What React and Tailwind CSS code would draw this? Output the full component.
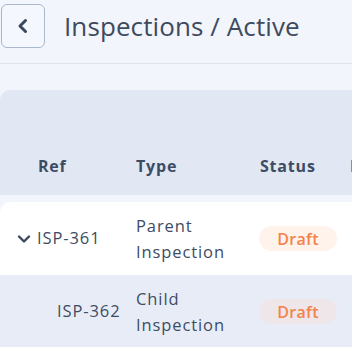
export default function App() {
  const font = { fontFamily: '"Open Sans", "Liberation Sans", sans-serif' };
  return (
    <div className="w-[352px] h-[347px] overflow-hidden bg-[#f2f5fc]" style={font}>
      <div className="flex items-center h-[64px] border-b border-[#dfe3ea] pl-[1px] pb-[14px] pt-[2px]">
        <button className="w-[44px] h-[44px] rounded-[6px] border border-[#a9b8cc] bg-[#f4f7fd] flex items-center justify-center">
          <svg width="16" height="16" viewBox="0 0 16 16">
            <path d="M10.5 2.5 L5 8 L10.5 13.5" fill="none" stroke="#3a475c" strokeWidth="3" strokeLinecap="round" strokeLinejoin="round" />
          </svg>
        </button>
        <div className="ml-[19px] text-[26px] leading-none text-[#3e4a5e] tracking-[0.1px]">Inspections / Active</div>
      </div>
      <div className="pt-[26px] w-[600px]">
        <div className="h-[105px] bg-[#e1e7f3] rounded-tl-[10px] flex items-end pb-[17px] text-[16px] font-bold text-[#3d4c64] tracking-[0.8px]">
          <div className="w-[136px] pl-[38px]">Ref</div>
          <div className="w-[124px]">Type</div>
          <div className="w-[90px]">Status</div>
          <div>Priority</div>
        </div>
        <div className="h-[7px]"></div>
        <div className="h-[73px] bg-white rounded-tl-[10px] flex items-center text-[16.5px] text-[#3d4c64] tracking-[0.9px]">
          <div className="w-[136px] flex items-center">
            <svg className="ml-[17px] mr-[6px]" width="14" height="10" viewBox="0 0 14 10">
              <path d="M2 2.5 L7 7.5 L12 2.5" fill="none" stroke="#3a475c" strokeWidth="2.4" strokeLinecap="round" strokeLinejoin="round" />
            </svg>
            <span>ISP-361</span>
          </div>
          <div className="w-[123px] leading-[26px]">Parent<br />Inspection</div>
          <div className="w-[78px] h-[25px] rounded-full bg-[#fff3ec] text-[#f4824a] font-semibold flex items-center justify-center text-[16px] tracking-[0.3px]">Draft</div>
        </div>
        <div className="h-[73px] bg-[#e8ecf6] flex items-center text-[16.5px] text-[#3d4c64] tracking-[0.9px]">
          <div className="w-[136px] pl-[57px]">ISP-362</div>
          <div className="w-[123px] leading-[26px]">Child<br />Inspection</div>
          <div className="w-[78px] h-[25px] rounded-full bg-[#efe6ea] text-[#f4824a] font-semibold flex items-center justify-center text-[16px] tracking-[0.3px]">Draft</div>
        </div>
      </div>
    </div>
  );
}
